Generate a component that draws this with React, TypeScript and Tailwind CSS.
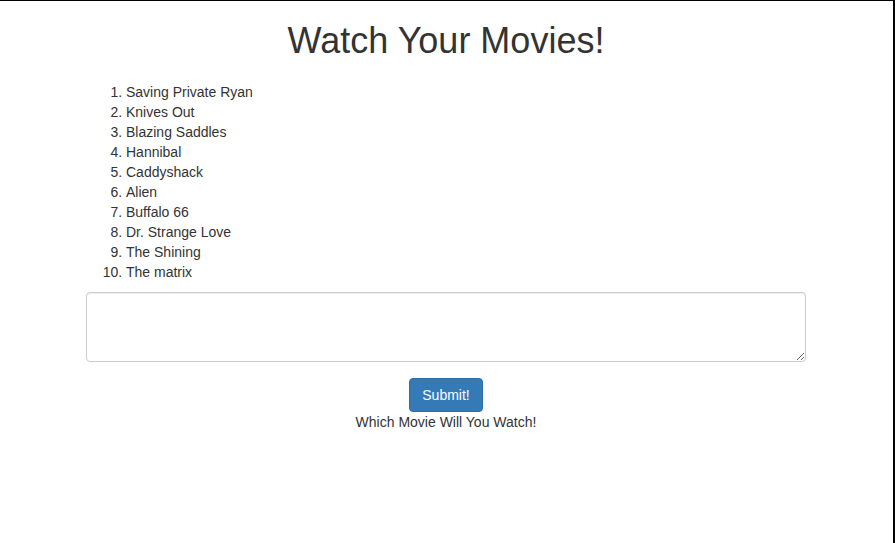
import React from "react";

const movies = [
  "Saving Private Ryan",
  "Knives Out",
  "Blazing Saddles",
  "Hannibal",
  "Caddyshack",
  "Alien",
  "Buffalo 66",
  "Dr. Strange Love",
  "The Shining",
  "The matrix",
];

export default function App() {
  return (
    <div
      className="w-[895px] h-[543px] bg-white border-t border-r-2 border-black text-[#333] text-[14px] leading-[20px] overflow-hidden"
      style={{ fontFamily: '"Liberation Sans", Arial, sans-serif' }}
    >
      <div className="w-[720px] ml-[86px]">
        <h1 className="mt-[20px] text-[36px] leading-[39.6px] font-normal text-center">
          Watch Your Movies!
        </h1>
        <ol className="mt-[21px] list-decimal pl-[40px]">
          {movies.map((m) => (
            <li key={m}>{m}</li>
          ))}
        </ol>
        <textarea className="block mt-[10px] w-full h-[70px] border border-[#ccc] rounded-[4px] shadow-[inset_0_1px_1px_rgba(0,0,0,0.075)] px-[12px] py-[6px] outline-none resize-y" />
        <button className="block mx-auto mt-[16px] w-[74px] h-[34px] bg-[#337ab7] border border-[#2e6da4] rounded-[4px] text-white text-[14px]">
          Submit!
        </button>
        <p className="text-center">Which Movie Will You Watch!</p>
      </div>
    </div>
  );
}
